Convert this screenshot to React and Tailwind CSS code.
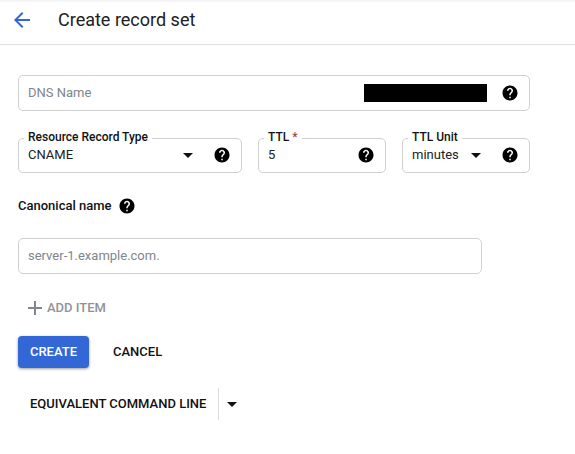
import { MdArrowBack, MdHelp, MdArrowDropDown, MdAdd } from "react-icons/md";

function Help({ className = "" }) {
  return <MdHelp size={18} className={`shrink-0 text-black ${className}`} />;
}

function Caret({ className = "" }) {
  return <MdArrowDropDown size={24} className={`shrink-0 text-[#111] ${className}`} />;
}

function Field({ label, required, width, children }) {
  return (
    <div className={`relative flex h-[35px] items-center rounded-[5px] border border-[#d0d0d0] pb-[1px] pl-[9px] pr-[10px] ${width}`}>
      <span className="absolute -top-[10px] left-[5px] bg-white px-[4px] text-[12px] leading-[16px] font-medium text-[#111]">
        {label}
        {required && <span className="text-[#a5443f]"> *</span>}
      </span>
      {children}
    </div>
  );
}

export default function App() {
  return (
    <div className="h-[454px] w-[575px] overflow-hidden bg-white font-['Roboto',sans-serif] text-[13px] text-[#202124]">
      <header className="flex h-[45px] items-center border-b border-[#e0e0e0] pb-[5px] pl-[10px] shadow-[inset_0_3px_3px_-2px_rgba(0,0,0,0.08)]">
        <MdArrowBack size={24} className="text-[#3367d6]" />
        <h1 className="ml-[24px] text-[18px] text-[#202124]">Create record set</h1>
      </header>

      <main className="px-[18px] pt-[30px]">
        <div className="flex h-[36px] w-[512px] items-center rounded-[5px] border border-[#d0d0d0] pl-[9px] pr-[10px]">
          <span className="text-[#80868b]">DNS Name</span>
          <div className="ml-auto mr-[14px] h-[18px] w-[123px] bg-black" />
          <Help />
        </div>

        <div className="mt-[27px] flex gap-[16px]">
          <Field label="Resource Record Type" width="w-[224px]">
            <span>CNAME</span>
            <Caret className="ml-auto mr-[13px]" />
            <Help />
          </Field>
          <Field label="TTL" required width="w-[128px]">
            <span>5</span>
            <Help className="ml-auto" />
          </Field>
          <Field label="TTL Unit" width="w-[128px]">
            <span>minutes</span>
            <Caret className="ml-auto mr-[13px]" />
            <Help />
          </Field>
        </div>

        <div className="mt-[24px] flex h-[18px] items-center gap-[6px]">
          <span className="font-medium text-[#111]">Canonical name</span>
          <Help />
        </div>

        <div className="mt-[23px] flex h-[36px] w-[464px] items-center rounded-[5px] border border-[#d0d0d0] pl-[9px]">
          <span className="text-[#80868b]">server-1.example.com.</span>
        </div>

        <button type="button" className="mt-[24px] flex h-[20px] items-center pl-[5px] text-[13px] font-medium text-[#8f9397]">
          <MdAdd size={24} className="text-[#80868b]" />
          ADD ITEM
        </button>

        <div className="mt-[18px] flex h-[32px] items-center">
          <button type="button" className="h-[32px] w-[71px] rounded-[4px] bg-[#3367d6] text-[13px] font-medium text-white shadow-[0_1px_3px_rgba(0,0,0,0.4)]">
            CREATE
          </button>
          <button type="button" className="ml-[24px] text-[13px] font-medium text-[#111]">
            CANCEL
          </button>
        </div>

        <div className="mt-[20px] flex h-[32px] items-center">
          <span className="ml-[12px] text-[13px] font-medium text-[#111]">EQUIVALENT COMMAND LINE</span>
          <div className="ml-[12px] h-[32px] w-px bg-[#dadce0]" />
          <Caret className="ml-[1px]" />
        </div>
      </main>
    </div>
  );
}
